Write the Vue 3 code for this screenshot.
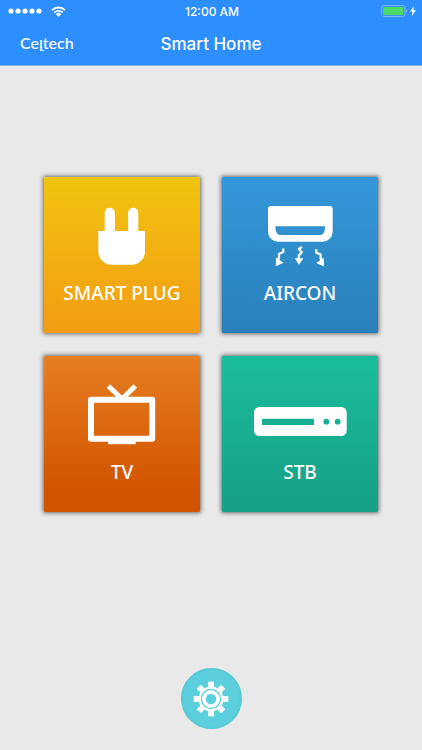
<template>
  <div class="app">
    <header class="header">
      <div class="status-bar">
        <div class="status-left">
          <svg class="signal" viewBox="0 0 34 6" aria-hidden="true">
            <circle v-for="n in 5" :key="n" :cx="n * 7 - 4" cy="3" r="2.6" />
          </svg>
          <svg class="wifi" viewBox="0 0 15 11" aria-hidden="true">
            <path d="M1 4.2a9.2 9.2 0 0 1 13 0M3.3 6.6a6 6 0 0 1 8.4 0" />
            <path class="solid" d="M7.5 10.8 4.8 8.2a3.8 3.8 0 0 1 5.4 0z" />
          </svg>
        </div>
        <span class="time">12:00 AM</span>
        <div class="status-right">
          <svg class="battery" viewBox="0 0 27 12" aria-hidden="true">
            <rect class="battery-case" x="0.6" y="0.6" width="23.3" height="10.8" rx="2" />
            <rect class="battery-level" x="2.2" y="2.1" width="20" height="7.8" rx="1" />
            <path class="battery-cap" d="M25 4c1.6.5 1.6 3.5 0 4z" />
          </svg>
          <svg class="bolt" viewBox="0 0 6 10" aria-hidden="true">
            <path d="M4 0 0 5.6h2.5L1.8 10 6 4.2H3.4z" />
          </svg>
        </div>
      </div>

      <div class="nav-bar">
        <svg class="logo" viewBox="0 0 60 28" role="img" aria-label="Celtech">
          <text x="0" y="19">Ce<tspan dy="2">l</tspan><tspan dy="-2">tech</tspan></text>
          <path d="M21.2 20.5h3" />
        </svg>
        <h1 class="title">Smart Home</h1>
      </div>
    </header>

    <main class="content">
      <div class="devices">
        <button
          v-for="device in devices"
          :key="device.id"
          type="button"
          class="tile"
          :class="device.id"
        >
          <svg class="icon" viewBox="0 0 156 104" aria-hidden="true">
            <g v-if="device.id === 'plug'">
              <rect x="60.7" y="30.7" width="10.2" height="30" rx="5.1" />
              <rect x="84.1" y="30.7" width="10.2" height="30" rx="5.1" />
              <path d="M54.3 54H101v20.5a13.2 13.2 0 0 1-13.2 13.2H67.5A13.2 13.2 0 0 1 54.3 74.5z" />
            </g>

            <g v-else-if="device.id === 'aircon'">
              <path
                fill-rule="evenodd"
                d="M49 29h58.7a3 3 0 0 1 3 3v22.7a10 10 0 0 1-10 10H56a10 10 0 0 1-10-10V32a3 3 0 0 1 3-3zM53.4 49.2c0 5.5 1.6 8.8 5.6 8.8h38.6c4 0 5.400-3.300 5.400-8.800z"
              />
              <path class="air" d="M61.300 71.500v3.600l-4.300 2v4l-2 4" />
              <path d="m53.800 89.200.2-8.700 7.600 5.200z" />
              <path class="air" d="M80 69.800l-3.200 2.200 3 3.200-3 3.400v4" />
              <path d="M72.800 81.200h8.600L77 87.700z" />
              <path class="air" d="M94.300 72.200v3.600l4.300 1.600v4l2.200 4" />
              <path d="m102 89.500-.3-8.700-7.400 5.200z" />
            </g>

            <g v-else-if="device.id === 'tv'">
              <path
                fill-rule="evenodd"
                d="M47 40.700h61.200a3 3 0 0 1 3 3v39a3 3 0 0 1-3 3H47a3 3 0 0 1-3-3v-39a3 3 0 0 1 3-3zm3 6v33h55.300v-33z"
              />
              <rect x="64" y="84" width="27.700" height="4.200" />
              <path class="antenna" d="M64.400 30 78 43 91.300 30" />
            </g>

            <g v-else>
              <path
                fill-rule="evenodd"
                d="M37.500 51h81.700a5.500 5.500 0 0 1 5.500 5.500v18a5.500 5.500 0 0 1-5.500 5.500H37.500a5.500 5.500 0 0 1-5.500-5.500v-18a5.500 5.500 0 0 1 5.500-5.500zM40 62.700V69h52v-6.300zM101.400 65.700a2.900 2.900 0 1 0 5.800 0a2.900 2.900 0 1 0-5.800 0zM112.800 65.700a2.900 2.900 0 1 0 5.800 0a2.900 2.900 0 1 0-5.800 0z"
              />
            </g>
          </svg>
          <span class="label">{{ device.name }}</span>
        </button>
      </div>

      <button type="button" class="settings" aria-label="Settings">
        <svg viewBox="-18 -18 36 36" aria-hidden="true">
          <rect
            v-for="n in 8"
            :key="n"
            x="-2.9"
            y="-17.3"
            width="5.8"
            height="7"
            :transform="`rotate(${n * 45})`"
          />
          <circle r="12.5" />
          <circle class="groove" r="9.6" />
          <circle class="hole" r="5.2" />
        </svg>
      </button>
    </main>
  </div>
</template>

<script setup>
const devices = [
  { id: 'plug', name: 'SMART PLUG' },
  { id: 'aircon', name: 'AIRCON' },
  { id: 'tv', name: 'TV' },
  { id: 'stb', name: 'STB' }
]
</script>

<style>
body {
  margin: 0;
  background: #e9e9e9;
}
</style>

<style scoped>
.app {
  display: flex;
  flex-direction: column;
  min-height: 100vh;
  background: #e9e9e9;
  font-family: Inter, "Liberation Sans", sans-serif;
}

/* Header */
.header {
  background: #2d8eff;
  border-bottom: 1px solid #7fb6f4;
  color: #fff;
}

.status-bar {
  display: grid;
  grid-template-columns: 1fr auto 1fr;
  align-items: center;
  height: 22px;
  padding: 0 6px 0 8px;
}

.status-left,
.status-right {
  display: flex;
  align-items: center;
}

.status-left {
  gap: 9px;
}

.status-right {
  justify-content: flex-end;
  gap: 2px;
}

.signal {
  width: 34px;
  height: 6px;
  fill: #fff;
}

.wifi {
  width: 15px;
  height: 11px;
  fill: none;
  stroke: #fff;
  stroke-width: 1.8;
}

.wifi .solid {
  fill: #fff;
  stroke: none;
}

.time {
  font-size: 12px;
  font-weight: 500;
}

.battery {
  width: 27px;
  height: 12px;
}

.battery-case {
  fill: none;
  stroke: #83bbfb;
}

.battery-level {
  fill: #4cd964;
}

.battery-cap {
  fill: #83bbfb;
}

.bolt {
  width: 6px;
  height: 10px;
  fill: #fff;
}

.nav-bar {
  display: grid;
  grid-template-columns: 1fr auto 1fr;
  align-items: center;
  height: 43px;
  padding: 0 20px;
}

.logo {
  width: 60px;
  height: 28px;
  fill: #fff;
  font-family: Lato, sans-serif;
  font-size: 16px;
  font-weight: 500;
}

.logo path {
  fill: none;
  stroke: #fff;
}

.title {
  margin: 0;
  font-size: 17px;
  font-weight: 500;
}

/* Device tiles */
.content {
  display: flex;
  flex: 1;
  flex-direction: column;
  align-items: center;
  padding: 111px 44px 21px;
}

.devices {
  display: grid;
  grid-template-columns: 1fr 1fr;
  gap: 23px 22px;
  width: 100%;
  max-width: 480px;
  margin-bottom: 40px;
}

.tile {
  display: flex;
  flex-direction: column;
  align-items: center;
  aspect-ratio: 1;
  padding: 0;
  border: 0;
  border-radius: 1px;
  box-shadow: 0 0 4px 1px rgba(0, 0, 0, 0.55);
  color: #fff;
  cursor: pointer;
}

.plug {
  background: linear-gradient(#f1c40f, #f39c12);
}

.aircon {
  background: linear-gradient(#3498db, #2980b9);
}

.tv {
  background: linear-gradient(#e67e22, #d35400 85%);
}

.stb {
  background: linear-gradient(#1abc9c, #16a085);
}

.icon {
  width: 100%;
  fill: #fff;
}

.air {
  fill: none;
  stroke: #fff;
  stroke-width: 2.2;
  stroke-linejoin: round;
}

.antenna {
  fill: none;
  stroke: #fff;
  stroke-width: 5;
}

.label {
  font-family: "Noto Sans", sans-serif;
  font-size: 19px;
  font-weight: 500;
  line-height: 24px;
}

/* Settings */
.settings {
  display: flex;
  align-items: center;
  justify-content: center;
  width: 61px;
  height: 61px;
  margin-top: auto;
  padding: 0;
  border: 0;
  border-radius: 50%;
  background: #5bcfdc;
  box-shadow: inset 0 0 3px #4dbdca;
  cursor: pointer;
}

.settings svg {
  width: 36px;
  height: 36px;
  fill: #fff;
}

.settings .groove {
  fill: none;
  stroke: #5bcfdc;
  stroke-width: 1.2;
}

.settings .hole {
  fill: #5bcfdc;
}
</style>
